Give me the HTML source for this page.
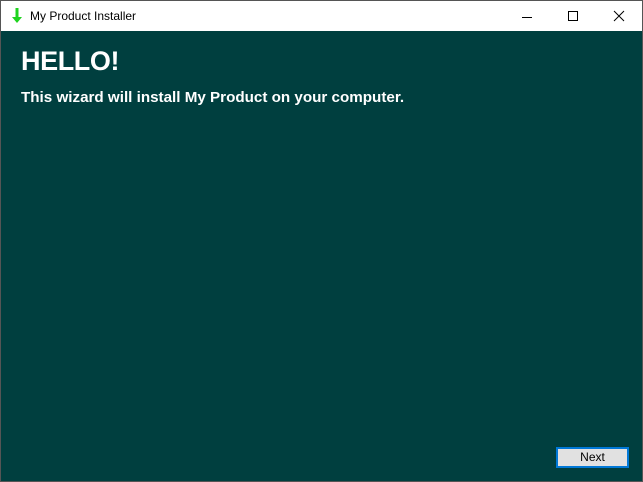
<!DOCTYPE html>
<html><head><style>
html,body{margin:0;padding:0;width:643px;height:482px;overflow:hidden;font-family:"Liberation Sans",sans-serif}
.win{position:absolute;left:0;top:0;width:641px;height:480px;border:1px solid #555;background:#003f3f}
.tb{position:absolute;left:0;top:0;width:641px;height:30px;background:#fff}
.title{position:absolute;left:29px;top:8px;font-size:12px;color:#000}
h1{position:absolute;left:20px;top:45px;margin:0;font-size:27px;font-weight:bold;color:#fff;letter-spacing:-0.4px}
.sub{position:absolute;left:20px;top:88px;font-size:15.2px;font-weight:bold;color:#fff}
.btn{position:absolute;left:555px;top:446px;width:69px;height:17px;border:2px solid #0078d7;background:#e1e1e1;font-size:12px;text-align:center;line-height:17px;color:#000}
</style></head><body>
<div class="win">
<div class="tb">
<svg style="position:absolute;left:10px;top:7px" width="12" height="16" viewBox="0 0 12 16"><path d="M4.5 0h3v9h3.5L6 15 1 9h3.5z" fill="#1ed31e"/></svg>
<div class="title">My Product Installer</div>
<svg style="position:absolute;left:520px;top:10px" width="12" height="12"><path d="M1 6.5h10" stroke="#000"/></svg>
<svg style="position:absolute;left:566px;top:9px" width="12" height="12"><rect x="1.5" y="1.5" width="9" height="9" fill="none" stroke="#000"/></svg>
<svg style="position:absolute;left:612px;top:9px" width="12" height="12"><path d="M1 1l10 10M11 1L1 11" stroke="#000"/></svg>
</div>
<h1>HELLO!</h1>
<div class="sub">This wizard will install My Product on your computer.</div>
<div class="btn">Next</div>
</div>
</body></html>
